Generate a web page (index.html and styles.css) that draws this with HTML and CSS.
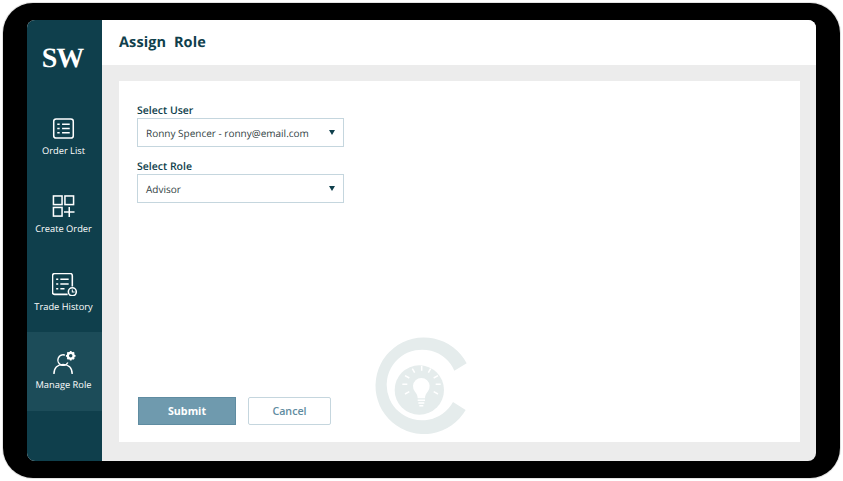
FILE: index.html
```html
<!DOCTYPE html>
<html lang="en">
<head>
<meta charset="utf-8">
<title>Assign Role</title>
<link rel="stylesheet" href="styles.css">
</head>
<body>
<div class="device">
  <div class="screen">
    <nav class="sidebar">
      <div class="logo">SW</div>
      <a class="nav-item">
        <svg class="nav-icon" viewBox="0 0 24 24" fill="none" stroke="#fff" stroke-width="1.6"><rect x="1.800" y="2" width="20.400" height="20" rx="2.500"/><path d="M5.500 7.500h2.500M10.500 7.500h8M5.500 12h2.500M10.500 12h8M5.500 16.500h2.500M10.500 16.500h8"/></svg>
        <span>Order List</span>
      </a>
      <a class="nav-item">
        <svg class="nav-icon" viewBox="0 0 24 24" fill="none" stroke="#fff" stroke-width="1.6"><rect x="1.500" y="1" width="9" height="9"/><rect x="13.500" y="1" width="9" height="9"/><rect x="1.500" y="13" width="9" height="9"/><path d="M18 12.500v10.500M12.500 17.800h11"/></svg>
        <span>Create Order</span>
      </a>
      <a class="nav-item">
        <svg class="nav-icon nav-icon-wide" viewBox="0 0 24 22" fill="none" stroke="#fff" stroke-width="1.5"><path d="M15 20.500H2.500a2 2 0 0 1-2-2V2.500a2 2 0 0 1 2-2h15a2 2 0 0 1 2 2V13"/><path d="M4 6h2M8 6h8M4 10.500h2M8 10.500h8M4 15h2M8 15h4"/><circle cx="19.500" cy="18" r="3.800" fill="#0f3f4c"/><path d="M19.500 15.800v2.400h2.200" stroke-width="1"/></svg>
        <span>Trade History</span>
      </a>
      <a class="nav-item active">
        <svg class="nav-icon nav-icon-wide" viewBox="0 0 24 24" fill="none" stroke="#fff" stroke-width="1.500"><path d="M12.500 4.300a5.500 5.500 0 1 0 3 7.700"/><path d="M1 24c0-6.500 4-10 9.500-10s9.500 3.500 9.500 10"/><circle cx="18.500" cy="5" r="3" stroke-width="2.400"/><path d="M18.500 0v2M18.500 8v2M13.500 5h2M21.500 5h2M15 1.500l1.400 1.400M20.600 7.100l1.400 1.400M15 8.500l1.400-1.400M20.600 2.900l1.400-1.400" stroke-width="1.800"/></svg>
        <span>Manage Role</span>
      </a>
    </nav>
    <main class="main">
      <header class="topbar"><h1>Assign &nbsp;Role</h1></header>
      <div class="content">
        <section class="card">
          <svg class="watermark" viewBox="0 0 330 330">
            <path class="wm-shape" d="M305 100A145 145 0 1 0 302 240L264 216A106 106 0 1 1 268 122Z"/>
            <circle class="wm-shape" cx="163" cy="180" r="74"/>
            <path class="wm-cut" d="M158 205c0-9-3-14-8-20a25 25 0 1 1 38 0c-5 6-8 11-8 20z"/>
            <path class="wm-line" d="M158 211h22M160 219h18M163 227h12"/>
            <path class="wm-line" d="M170 108v14M142 116l7 12M197 116l-7 12M120 137l13 7M219 137l-13 7M112 163h15M227 163h-15M120 192l13-7M219 192l-13-7"/>
          </svg>
          <form class="form">
            <div class="field">
              <label class="label">Select User</label>
              <div class="select"><span>Ronny Spencer - ronny@email.com</span><i class="caret"></i></div>
            </div>
            <div class="field">
              <label class="label">Select Role</label>
              <div class="select"><span>Advisor</span><i class="caret"></i></div>
            </div>
            <div class="actions">
              <button class="btn btn-primary" type="button">Submit</button>
              <button class="btn btn-secondary" type="button">Cancel</button>
            </div>
          </form>
        </section>
      </div>
    </main>
  </div>
</div>
</body>
</html>
```
FILE: styles.css
```css
* { box-sizing: border-box; }
html, body { margin: 0; height: 100%; background: #fff; }
body {
  padding: 3px;
  font-family: "Open Sans", sans-serif;
  text-rendering: geometricPrecision;
}
.device {
  width: 837px;
  height: 475px;
  background: #000;
  border-radius: 30px;
  padding: 17px 24px;
  box-shadow: 0 0 0 1px #e2e2e2;
}
.screen {
  display: flex;
  height: 441px;
  border-radius: 8px;
  overflow: hidden;
  background: #ececec;
}
.sidebar {
  width: 75px;
  flex: none;
  background: #0f3f4c;
  color: #fff;
}
.logo {
  height: 78px;
  display: flex;
  align-items: center;
  justify-content: center;
  font-family: "Liberation Serif", serif;
  font-size: 28px;
  font-weight: 700;
  letter-spacing: -1px;
  padding: 0 4px 0 0;
}
.nav-item {
  height: 78px;
  display: flex;
  flex-direction: column;
  align-items: center;
  padding: 19px 2px 0 0;
  font-size: 9.300px;
  line-height: 13px;
  color: #fff;
}
.nav-item.active { background: #1c4c59; height: 79px; }
.nav-icon { width: 23px; height: 23px; margin-bottom: 3.500px; flex: none; }
.nav-icon-wide { width: 25px; margin-left: 2px; }
.main { flex: 1; display: flex; flex-direction: column; }
.topbar {
  height: 45px;
  background: #fff;
  display: flex;
  align-items: center;
  padding: 0 0 1px 17px;
}
.topbar h1 {
  margin: 0;
  font-size: 14.500px;
  font-weight: 700;
  color: #0f3f4c;
  letter-spacing: 0.100px;
}
.content { flex: 1; padding: 16px 16px 19px 17px; }
.card {
  position: relative;
  height: 361px;
  background: #fff;
  padding: 24px 18px 17px;
}
.form { display: flex; flex-direction: column; height: 100%; position: relative; }
.field { width: 207px; margin-bottom: 14px; }
.label {
  display: block;
  font-size: 10.500px;
  line-height: 13px;
  font-weight: 600;
  color: #0f3f4c;
}
.select {
  height: 29px;
  border: 1px solid #c5d6de;
  display: flex;
  align-items: center;
  justify-content: space-between;
  padding: 0 8px 0 8px;
  font-size: 10px;
  color: #333f44;
}
.caret {
  width: 0;
  height: 0;
  border-left: 3.500px solid transparent;
  border-right: 3.500px solid transparent;
  border-top: 5px solid #0f3f4c;
}
.actions { margin-top: auto; display: flex; gap: 12px; }
.btn {
  height: 28px;
  font-family: inherit;
  font-size: 10.700px;
  padding: 0;
}
.btn-primary {
  width: 98px;
  margin-left: 1px;
  background: #6f9aae;
  border: 1px solid #5f8ca1;
  color: #fff;
  font-weight: 700;
}
.btn-secondary {
  width: 83px;
  background: #fff;
  border: 1px solid #c5d6de;
  border-radius: 2px;
  color: #5f8ca1;
  font-weight: 600;
}
.watermark {
  position: absolute;
  left: 246px;
  top: 249px;
  width: 110px;
  height: 110px;
}
.wm-shape { fill: #e5ecec; }
.wm-cut { fill: #fff; }
.wm-line { fill: none; stroke: #fff; stroke-width: 4.500; }
```
